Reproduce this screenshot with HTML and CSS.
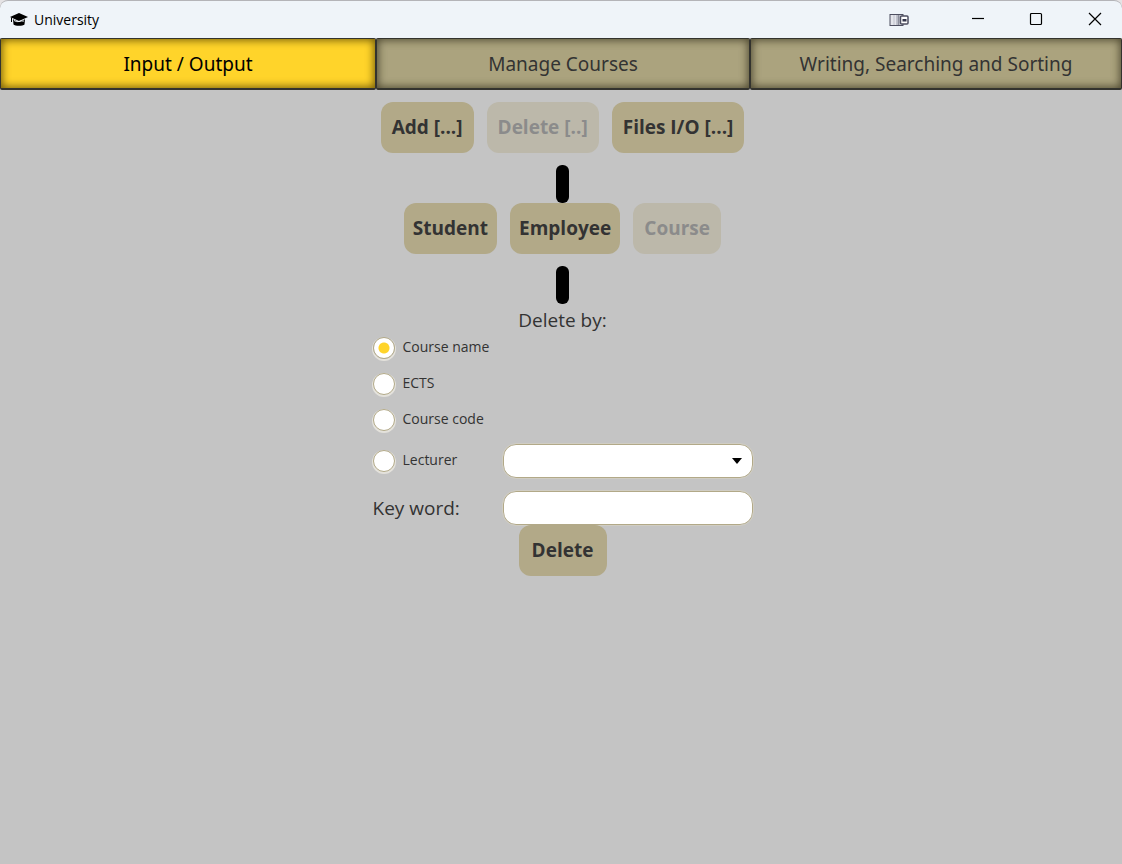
FILE: index.html
```
<!DOCTYPE html>
<html lang="en">
<head>
<meta charset="utf-8">
<title>University</title>
<link rel="stylesheet" href="styles.css">
</head>
<body>
<div class="window">
  <header class="titlebar">
    <svg class="app-icon" width="20" height="16" viewBox="0 0 20 16" aria-hidden="true">
      <path d="M10 1 19 5 10 9 1 5Z"/>
      <path d="M4 7.3 10 10 16 7.3 15.500 12.500C14 14.300 6 14.300 4.500 12.500Z"/>
      <path d="M5 8.500Q8 10.300 10 9.500T15 9" fill="none" stroke="#eff4f9" stroke-width="1"/>
      <path d="M2.500 5.500V10" stroke="#000" stroke-width="1"/>
    </svg>
    <span class="app-name">University</span>
    <svg class="dock-icon" width="20" height="14" viewBox="0 0 20 14" aria-hidden="true">
      <rect x="1" y="1.500" width="13" height="11" fill="#e4e5eb" stroke="#4d4e60"/>
      <path d="M5 2v10M7.500 2v10" stroke="#c0c2cd"/>
      <path d="M9.500 2v10" stroke="#8c8e9c" stroke-width="2"/>
      <rect x="11.500" y="3" width="7.500" height="8" rx="1" fill="#fff" stroke="#4d4e60" stroke-width="1.500"/>
      <rect x="13.500" y="6" width="4" height="2.500" fill="#33344a"/>
    </svg>
    <button class="win-btn" aria-label="Minimize"><svg width="14" height="14" viewBox="0 0 14 14"><path d="M1 6.500h12"/></svg></button>
    <button class="win-btn" aria-label="Maximize"><svg width="14" height="14" viewBox="0 0 14 14"><rect x="1.500" y="1.500" width="11" height="11" rx="1"/></svg></button>
    <button class="win-btn" aria-label="Close"><svg width="14" height="14" viewBox="0 0 14 14"><path d="M1 1 13 13M13 1 1 13"/></svg></button>
  </header>
  <nav class="tabs">
    <button class="tab active">Input / Output</button>
    <button class="tab">Manage Courses</button>
    <button class="tab">Writing, Searching and Sorting</button>
  </nav>
  <main class="content">
    <div class="btn-row wide">
      <button class="btn">Add [...]</button>
      <button class="btn" disabled>Delete [..]</button>
      <button class="btn">Files I/O [...]</button>
    </div>
    <div class="link-bar"></div>
    <div class="btn-row">
      <button class="btn">Student</button>
      <button class="btn">Employee</button>
      <button class="btn" disabled>Course</button>
    </div>
    <div class="link-bar"></div>
    <form class="form">
      <h2 class="form-title" id="delete-by">Delete by:</h2>
      <div class="fields" role="group" aria-labelledby="delete-by">
        <label class="option"><input class="radio" type="radio" name="by" checked>Course name</label>
        <label class="option"><input class="radio" type="radio" name="by">ECTS</label>
        <label class="option"><input class="radio" type="radio" name="by">Course code</label>
        <label class="option with-field"><input class="radio" type="radio" name="by">Lecturer</label>
        <div class="select-wrap">
          <select class="field" aria-label="Lecturer"><option></option></select>
          <svg class="arrow" width="10" height="6" viewBox="0 0 10 6" aria-hidden="true"><path d="M0 0H10L5 6Z"/></svg>
        </div>
        <label class="key-label" for="key">Key word:</label>
        <input class="field" id="key" type="text">
      </div>
      <button class="btn" type="button">Delete</button>
    </form>
  </main>
</div>
</body>
</html>
```
FILE: styles.css
```
* { box-sizing: border-box; }
body {
  margin: 0;
  background: #e5e3e5;
  color: #333;
  font-family: "Segoe UI", "Open Sans", "Noto Sans", sans-serif;
}
button, input, select { font: inherit; color: inherit; }
.window {
  display: flex;
  flex-direction: column;
  min-height: 100vh;
  background: #c4c4c4;
  border-radius: 8px 8px 0 0;
  overflow: hidden;
}
.titlebar {
  display: flex;
  align-items: center;
  height: 38px;
  padding-left: 9px;
  background: #eff4f9;
  border-top: 1px solid #b4b4b8;
  border-radius: 8px 8px 0 0;
  color: #000;
}
.app-name { flex: 1; margin-left: 5px; font-size: 14px; }
.dock-icon { margin-right: 40px; }
.win-btn {
  display: flex;
  align-items: center;
  justify-content: center;
  width: 58px;
  height: 36px;
  padding: 0 0 2px;
  border: 0;
  background: none;
}
.win-btn:last-child { width: 58px; padding-left: 2px; margin-right: -1px; }
.win-btn svg { fill: none; stroke: #000; stroke-width: 1.2; }
.tabs { display: grid; grid-template-columns: 376fr 374fr 372fr; }
.tab {
  height: 52px;
  padding: 0;
  border: 1px solid #33332e;
  border-bottom-width: 2px;
  border-radius: 2px;
  background: #aba37e;
  box-shadow: inset 0 0 8px 1px #4b462f;
  font-family: Tahoma, "Noto Sans", sans-serif;
  font-size: 19px;
}
.tab.active { background: #ffd42a; color: #000; box-shadow: inset 0 0 8px 1px #6b5507; }
.content { display: flex; flex-direction: column; align-items: center; padding: 12px 0 0 3px; }
.btn-row { display: flex; gap: 13px; }
.btn {
  height: 51px;
  min-width: 88px;
  padding: 0 9px 2px;
  border: 0;
  border-radius: 12px;
  background: #b2a988;
  font-size: 19px;
  font-weight: 700;
}
.btn-row.wide .btn { padding: 0 11px 2px; }
.btn:disabled { background: #bcb8aa; color: #8b8b8b; }
.link-bar { width: 13px; height: 38px; margin-top: 12px; border-radius: 6px; background: #000; }
.form { display: flex; flex-direction: column; align-items: center; }
.form-title { margin: 3px 0 0; font-size: 19px; line-height: 26px; font-weight: 400; }
.fields { display: grid; grid-template-columns: 130px 250px; align-items: center; }
.option {
  grid-column: 1 / -1;
  display: flex;
  align-items: center;
  gap: 8px;
  height: 24px;
  margin: 2px 0 10px;
  font-size: 14px;
  line-height: 20px;
}
.option.with-field { grid-column: 1; margin: 0 0 12px; }
.radio {
  appearance: none;
  width: 22px;
  height: 22px;
  margin: 1px 0 0;
  border: 1px solid #b2a988;
  border-radius: 50%;
  background: #fff;
  box-shadow: 0 1px 0 1px #e4e2dc;
}
.radio:checked { background: radial-gradient(circle, #ffd42a 5px, #fff 6px); }
.select-wrap { position: relative; margin: 3px 0 13px; }
.field {
  display: block;
  appearance: none;
  width: 100%;
  height: 34px;
  padding: 0 12px;
  border: 1px solid #b2a988;
  outline: 1px solid #d0cdc3;
  border-radius: 13px;
  background: #fff;
}
.arrow { position: absolute; right: 11px; top: 14px; pointer-events: none; }
.key-label { font-size: 19px; }
```
